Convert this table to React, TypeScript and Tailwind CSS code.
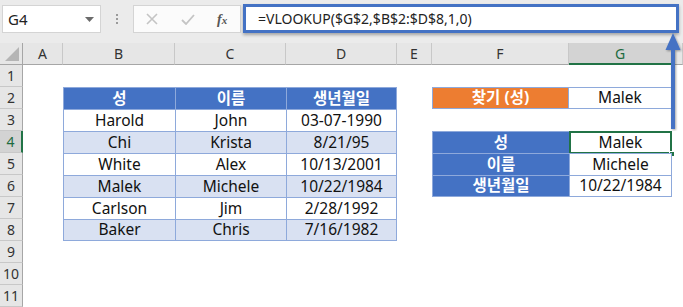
import React from "react";

const COLS = ["A", "B", "C", "D", "E", "F", "G", ""];
const GRID =
  "grid grid-cols-[23px_40px_112px_111px_111px_35px_137px_103px_11px] grid-rows-[22px_repeat(11,22px)]";

const people = [
  ["Harold", "John", "03-07-1990"],
  ["Chi", "Krista", "8/21/95"],
  ["White", "Alex", "10/13/2001"],
  ["Malek", "Michele", "10/22/1984"],
  ["Carlson", "Jim", "2/28/1992"],
  ["Baker", "Chris", "7/16/1982"],
];

const font = "font-['Noto_Sans','Noto_Sans_CJK_KR',sans-serif]";

function TopBar() {
  return (
    <div className="relative h-[43px] bg-[#ebebeb] flex items-start pt-[5px] pl-[2px]">
      {/* name box */}
      <div className="w-[99px] h-[28px] bg-white border border-[#d4d4d4] flex items-center justify-between pl-[5px] pr-[6px]">
        <span className="text-[15px] text-[#222]">G4</span>
        <svg width="9" height="5" viewBox="0 0 9 5">
          <path d="M0 0h9L4.5 5z" fill="#6b6b6b" />
        </svg>
      </div>
      {/* splitter dots */}
      <div className="w-[32px] h-[28px] flex flex-col items-center justify-center gap-[2px]">
        <span className="w-[2px] h-[2px] bg-[#9a9a9a]" />
        <span className="w-[2px] h-[2px] bg-[#9a9a9a]" />
        <span className="w-[2px] h-[2px] bg-[#9a9a9a]" />
      </div>
      {/* cancel / enter / fx */}
      <div className="w-[108px] h-[28px] bg-[#fbfbfb] border border-[#d4d4d4] flex items-center">
        <svg width="12" height="12" viewBox="0 0 12 12" className="ml-[12px]">
          <path d="M1 1l10 10M11 1L1 11" stroke="#c4c4c4" strokeWidth="1.6" />
        </svg>
        <svg width="14" height="11" viewBox="0 0 14 11" className="ml-[23px]">
          <path d="M1 6l4 4L13 1" stroke="#c4c4c4" strokeWidth="1.8" fill="none" />
        </svg>
        <span className="ml-[22px] text-[14px] italic font-['Liberation_Serif',serif] text-[#555] font-bold">
          f<span className="text-[11px]">x</span>
        </span>
      </div>
      {/* formula input */}
      <div className="ml-[2px] mt-[-1px] w-[436px] h-[29px] bg-white border-[3px] border-[#4472c4] shadow-[0_2px_3px_rgba(0,0,0,0.3)] flex items-center pl-[12px]">
        <span className="text-[14px] text-[#222]">
          =VLOOKUP($G$2,$B$2:$D$8,1,0)
        </span>
      </div>
    </div>
  );
}

function Cell({
  children,
  className = "",
}: {
  children?: React.ReactNode;
  className?: string;
}) {
  return (
    <div className={`flex items-center justify-center text-[15.5px] ${className}`}>
      {children}
    </div>
  );
}

function Sheet() {
  const cells: React.ReactNode[] = [];

  // corner
  cells.push(
    <div
      key="corner"
      className="relative bg-[#e6e6e6] border-r border-b border-[#a6a6a6]"
    >
      <svg className="absolute right-[3px] bottom-[3px]" width="14" height="14" viewBox="0 0 14 14">
        <path d="M14 0v14H0z" fill="#b5b5b5" />
      </svg>
    </div>
  );

  // column headers
  COLS.forEach((c) => {
    const sel = c === "G";
    cells.push(
      <div
        key={"h" + c}
        className={`flex items-center justify-center text-[14px] border-r border-[#c8c8c8] ${
          sel
            ? "bg-[#d3d3d3] text-[#1e6b3f] border-b-2 border-b-[#217346]"
            : "bg-[#e6e6e6] text-[#333] border-b border-b-[#a6a6a6]"
        }`}
      >
        {c}
      </div>
    );
  });

  const tb = "border-[#8ea9db]";

  for (let r = 1; r <= 11; r++) {
    const sel = r === 4;
    cells.push(
      <div
        key={"r" + r}
        className={`flex items-center justify-center text-[14px] border-b border-[#c8c8c8] ${
          sel
            ? "bg-[#d3d3d3] text-[#1e6b3f] border-r-2 border-r-[#217346]"
            : "bg-[#e6e6e6] text-[#333] border-r border-r-[#a6a6a6]"
        }`}
      >
        {r}
      </div>
    );

    // A
    cells.push(<div key={`a${r}`} />);

    // B..D data table
    for (let c = 0; c < 3; c++) {
      let content: React.ReactNode = null;
      let cls = "";
      if (r === 2) {
        content = ["성", "이름", "생년월일"][c];
        cls = `bg-[#4472c4] text-white font-bold border-l border-t ${tb} ${
          c === 2 ? "border-r" : ""
        }`;
      } else if (r >= 3 && r <= 8) {
        const p = people[r - 3];
        content = p[c];
        const band = r % 2 === 0 ? "bg-[#d9e1f2]" : "bg-white";
        cls = `${band} text-[#111] border-l border-t ${tb} ${c === 2 ? "border-r" : ""} ${
          r === 8 ? "border-b" : ""
        }`;
      }
      cells.push(
        <Cell key={`t${r}${c}`} className={cls}>
          {content}
        </Cell>
      );
    }

    // E
    cells.push(<div key={`e${r}`} />);

    // F
    let f: React.ReactNode = null;
    let fc = "";
    if (r === 2) {
      f = "찾기 (성)";
      fc = "bg-[#ed7d31] text-white font-bold border border-[#8ea9db]";
    } else if (r >= 4 && r <= 6) {
      f = ["성", "이름", "생년월일"][r - 4];
      fc = `bg-[#4472c4] text-white font-bold border-l border-t ${tb} ${
        r === 6 ? "border-b" : ""
      }`;
    }
    cells.push(
      <Cell key={`f${r}`} className={fc}>
        {f}
      </Cell>
    );

    // G
    let g: React.ReactNode = null;
    let gc = "";
    if (r === 2) {
      g = "Malek";
      gc = "bg-white text-[#111] border-t border-r border-b border-[#8ea9db]";
    } else if (r >= 4 && r <= 6) {
      g = ["Malek", "Michele", "10/22/1984"][r - 4];
      gc = `bg-white text-[#111] border-l border-t border-r ${tb} ${r === 6 ? "border-b" : ""}`;
    }
    cells.push(
      <Cell key={`g${r}`} className={`relative ${gc}`}>
        {g}
        {r === 4 && (
          <>
            <div className="absolute inset-[-1px] border-2 border-[#217346]" />
            <div className="absolute right-[-4px] bottom-[-4px] w-[6px] h-[6px] bg-[#217346] border border-white" />
          </>
        )}
      </Cell>
    );

    // H
    cells.push(<div key={`x${r}`} />);
  }

  return <div className={`${GRID} ${font}`}>{cells}</div>;
}

export default function App() {
  return (
    <div className={`relative w-[683px] h-[307px] overflow-hidden bg-white ${font}`}>
      <TopBar />
      <Sheet />
      {/* pointer from the selected cell up to the formula */}
      <svg
        className="absolute left-[663px] top-[31px]"
        width="20"
        height="100"
        viewBox="0 0 20 100"
      >
        <defs>
          <filter id="sh" x="-50%" y="-10%" width="200%" height="130%">
            <feDropShadow dx="1" dy="1" stdDeviation="1" floodColor="#000" floodOpacity="0.35" />
          </filter>
        </defs>
        <g filter="url(#sh)">
          <path d="M8 18h4v80h-4z" fill="#4472c4" />
          <path d="M10 2L17.5 19H2.5z" fill="#4472c4" />
        </g>
      </svg>
    </div>
  );
}
